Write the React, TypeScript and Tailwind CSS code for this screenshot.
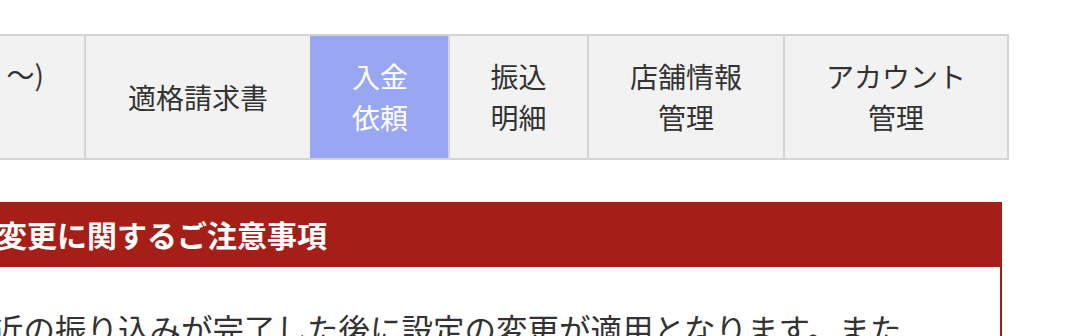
const font = { fontFamily: '"Noto Sans CJK JP", "Noto Sans", sans-serif' }

const tabs = [
  { label: ['適格請求書'], width: 'w-[226px]' },
  { label: ['入金', '依頼'], width: 'w-[138px]', active: true },
  { label: ['振込', '明細'], width: 'w-[139px]' },
  { label: ['店舗情報', '管理'], width: 'w-[196px]' },
  { label: ['アカウント', '管理'], width: 'w-[226px]', last: true },
]

export default function App() {
  return (
    <div className="w-[1078px] h-[336px] overflow-hidden bg-white text-[#333]" style={font}>
      <nav className="mt-[34px] flex w-fit h-[126px] border-y-2 border-[#d4d4d4]">
        <div className="w-[84px] shrink-0 bg-[#f2f2f2] flex justify-end pr-[40px] pt-[18px] text-[28px] leading-[41px] whitespace-nowrap">
          <span>〜)</span>
        </div>
        {tabs.map((t) => (
          <div
            key={t.label.join('')}
            className={`${t.width} shrink-0 flex flex-col items-center justify-center text-[28px] leading-[41px] border-l-2 ${
              t.active ? 'bg-[#99a7f2] border-[#99a7f2] text-white' : 'bg-[#f2f2f2] border-[#d4d4d4]'
            } ${t.last ? 'border-r-2' : ''}`}
          >
            {t.label.map((line) => (
              <span key={line}>{line}</span>
            ))}
          </div>
        ))}
      </nav>

      <section className="mt-[42px] ml-[-30px] w-[1032px] border-2 border-[#a51f18]">
        <h2 className="bg-[#a51f18] h-[63px] flex items-center pl-[25px] pb-[2px] text-white font-bold text-[30px] whitespace-nowrap">
          変更に関するご注意事項
        </h2>
        <p className="pt-[36px] pl-[20px] pr-4 text-[31.5px] leading-[50px] whitespace-nowrap">
          近の振り込みが完了した後に設定の変更が適用となります。また
        </p>
      </section>
    </div>
  )
}
